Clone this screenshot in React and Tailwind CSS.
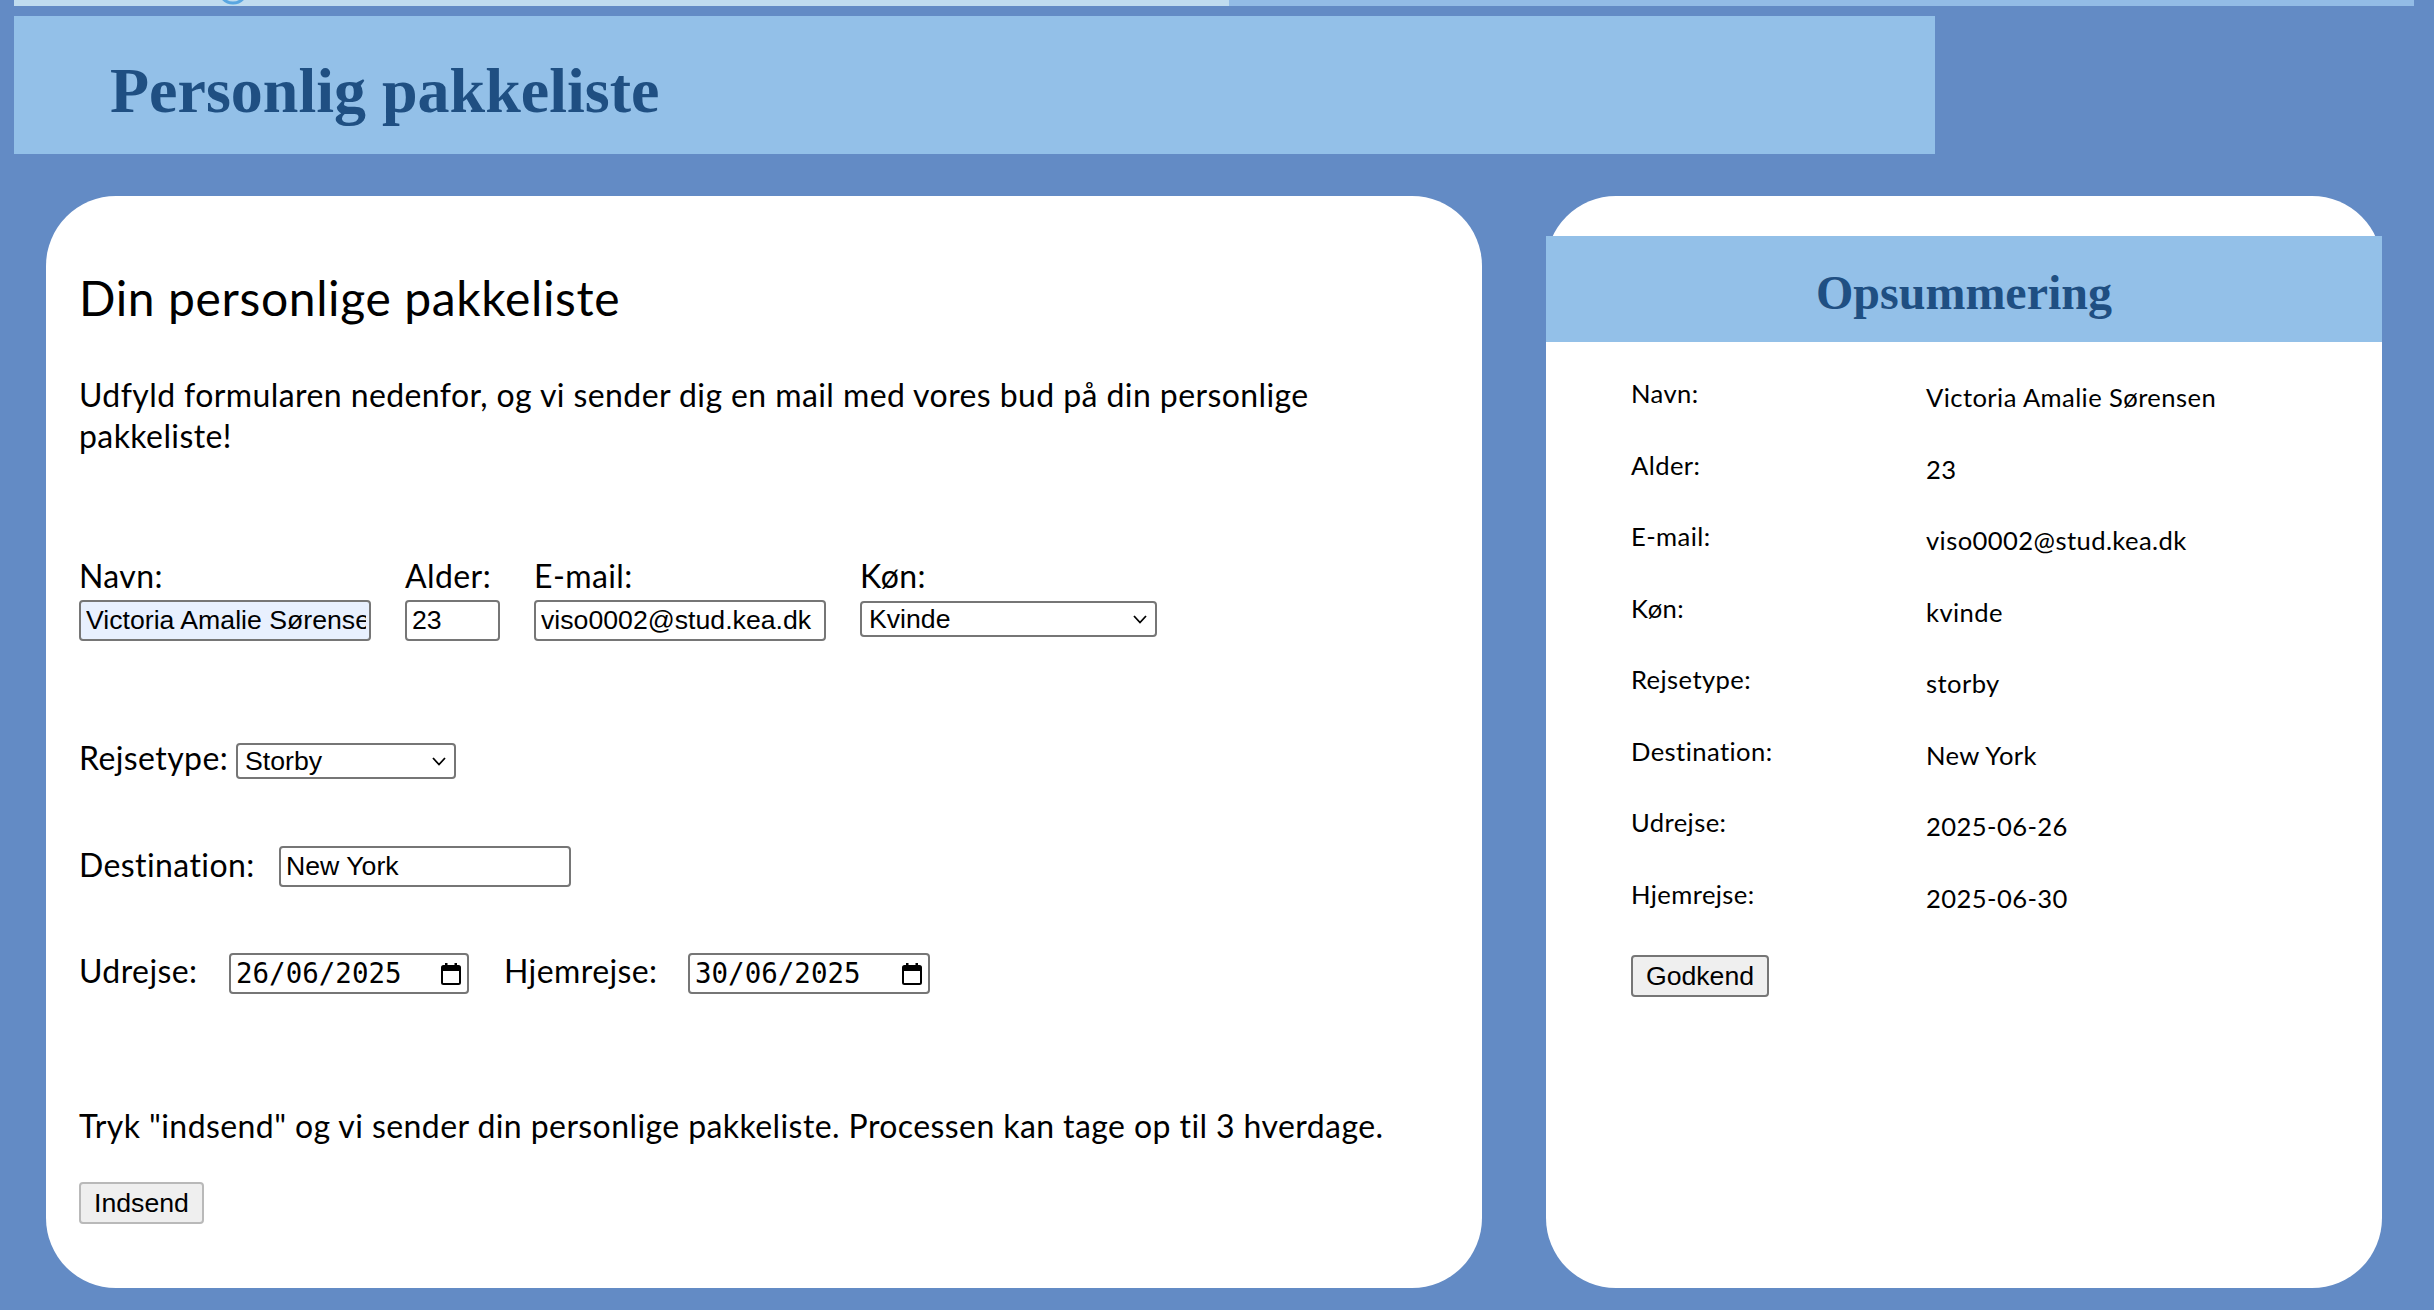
import React from "react";

function Chevron() {
  return (
    <svg width="14" height="9" viewBox="0 0 14 9" className="shrink-0">
      <polyline points="1,1 7,7.5 13,1" fill="none" stroke="#000" strokeWidth="1.8" />
    </svg>
  );
}

function CalendarIcon() {
  return (
    <svg width="20" height="22" viewBox="0 0 20 22" className="shrink-0">
      <rect x="4" y="0" width="2.5" height="4" fill="#000" />
      <rect x="13.5" y="0" width="2.5" height="4" fill="#000" />
      <rect x="1" y="3" width="18" height="18" rx="1.5" fill="none" stroke="#000" strokeWidth="2" />
      <rect x="1" y="3" width="18" height="5" fill="#000" />
    </svg>
  );
}

function TextInput({ value, className = "", autofill = false }) {
  return (
    <input
      readOnly
      value={value}
      className={`h-[41px] rounded-[4px] border-2 border-[#767676] ${autofill ? "bg-[#e8f0fe]" : "bg-white"} pl-[5px] pr-[3px] font-['Liberation_Sans',Arial,sans-serif] text-[26.67px] tracking-normal text-black outline-none ${className}`}
    />
  );
}

function FakeSelect({ value, className = "" }) {
  return (
    <div
      className={`flex h-[36px] items-center justify-between rounded-[4px] border-2 border-[#767676] bg-white pl-[7px] pr-[8px] font-['Liberation_Sans',Arial,sans-serif] text-[26.67px] leading-none tracking-normal text-black ${className}`}
    >
      <span>{value}</span>
      <Chevron />
    </div>
  );
}

function FakeDate({ value, className = "" }) {
  return (
    <div
      className={`flex h-[41px] items-center justify-between rounded-[4px] border-2 border-[#767676] bg-white pl-[5px] pr-[6px] font-['DejaVu_Sans_Mono','Liberation_Mono',monospace] text-[27.5px] leading-none tracking-normal text-black ${className}`}
    >
      <span>{value}</span>
      <CalendarIcon />
    </div>
  );
}

const rows = [
  ["Navn:", "Victoria Amalie Sørensen"],
  ["Alder:", "23"],
  ["E-mail:", "viso0002@stud.kea.dk"],
  ["Køn:", "kvinde"],
  ["Rejsetype:", "storby"],
  ["Destination:", "New York"],
  ["Udrejse:", "2025-06-26"],
  ["Hjemrejse:", "2025-06-30"],
];

export default function App() {
  return (
    <div className="min-h-screen w-full overflow-hidden bg-[#638bc5] font-['Lato','Noto_Sans',sans-serif] tracking-[0.41px] text-black">
      {/* leftover strip at the very top */}
      <div className="ml-[14px] flex h-[6px]">
        <div className="relative h-full w-[1215px] overflow-hidden bg-[#c0dcef]">
          <svg
            width="40"
            height="40"
            viewBox="0 0 40 40"
            className="absolute left-[199px] top-[-31px]"
          >
            <circle cx="20" cy="20" r="14" fill="none" stroke="#5aa6e0" strokeWidth="3" />
          </svg>
        </div>
        <div className="h-full w-[1185px] bg-[#93bce6]" />
      </div>

      {/* header */}
      <header className="ml-[14px] mt-[10px] h-[138px] w-[1921px] bg-[#93c0e8] pl-[96px] pt-[39px]">
        <h1 className="font-['Liberation_Serif','Times_New_Roman',serif] text-[64px] font-bold leading-[71px] tracking-normal text-[#1f4f82]">
          Personlig pakkeliste
        </h1>
      </header>

      <main className="ml-[46px] mt-[42px] flex gap-[64px]">
        {/* form card */}
        <section className="h-[1092px] w-[1436px] rounded-[70px] bg-white pl-[33px] pt-[73px]">
          <h2 className="text-[48px] font-normal leading-[58px] tracking-[0.62px]">Din personlige pakkeliste</h2>
          <p className="mt-[47px] w-[1380px] text-[32px] leading-[41px]">
            Udfyld formularen nedenfor, og vi sender dig en mail med vores bud på din personlige
            <br />
            pakkeliste!
          </p>

          {/* row 1 */}
          <div className="mt-[101px] flex items-start gap-[34px]">
            <div className="flex flex-col">
              <label className="text-[32px] leading-[38px]">Navn:</label>
              <TextInput value="Victoria Amalie Sørensen" autofill className="mt-[5px] w-[292px]" />
            </div>
            <div className="flex flex-col">
              <label className="text-[32px] leading-[38px]">Alder:</label>
              <TextInput value="23" className="mt-[5px] w-[95px]" />
            </div>
            <div className="flex flex-col">
              <label className="text-[32px] leading-[38px]">E-mail:</label>
              <TextInput value="viso0002@stud.kea.dk" className="mt-[5px] w-[292px]" />
            </div>
            <div className="flex flex-col">
              <label className="text-[32px] leading-[38px]">Køn:</label>
              <FakeSelect value="Kvinde" className="mt-[6px] w-[297px]" />
            </div>
          </div>

          {/* row 2 */}
          <div className="mt-[102px] flex items-start">
            <label className="w-[157px] text-[32px] leading-[30px]">Rejsetype:</label>
            <FakeSelect value="Storby" className="w-[220px]" />
          </div>

          {/* row 3 */}
          <div className="mt-[67px] flex items-start">
            <label className="mt-[4px] w-[200px] text-[32px] leading-[30px]">Destination:</label>
            <TextInput value="New York" className="w-[292px]" />
          </div>

          {/* row 4 */}
          <div className="mt-[66px] flex items-start">
            <label className="mt-[3px] w-[150px] text-[32px] leading-[30px]">Udrejse:</label>
            <FakeDate value="26/06/2025" className="w-[240px]" />
            <label className="ml-[35px] mt-[3px] w-[184px] text-[32px] leading-[30px]">Hjemrejse:</label>
            <FakeDate value="30/06/2025" className="w-[242px]" />
          </div>

          <p className="mt-[111px] text-[32px] leading-[41px]">
            Tryk "indsend" og vi sender din personlige pakkeliste. Processen kan tage op til 3 hverdage.
          </p>
          <button className="mt-[36px] flex h-[42px] w-[125px] items-center justify-center rounded-[4px] border-2 border-[#b9b9b9] bg-[#efefef] font-['Liberation_Sans',Arial,sans-serif] text-[26.67px] leading-none tracking-normal text-black">
            Indsend
          </button>
        </section>

        {/* summary card */}
        <aside className="h-[1092px] w-[836px] rounded-[70px] bg-white pt-[40px]">
          <div className="flex h-[106px] items-center justify-center bg-[#93c0e8] pt-[8px]">
            <h2 className="font-['Liberation_Serif','Times_New_Roman',serif] text-[48px] font-bold leading-[54px] tracking-normal text-[#1f4f82]">
              Opsummering
            </h2>
          </div>
          <div className="mt-[36px] pl-[85px]">
            {rows.map(([label, value]) => (
              <div key={label} className="flex h-[71.5px] items-start">
                <span className="w-[295px] text-[25.6px] leading-[30px]">{label}</span>
                <span className="pt-[4px] text-[25.6px] leading-[30px]">{value}</span>
              </div>
            ))}
            <button className="mt-[5px] flex h-[42px] w-[138px] items-center justify-center rounded-[4px] border-2 border-[#767676] bg-[#efefef] font-['Liberation_Sans',Arial,sans-serif] text-[26.67px] leading-none tracking-normal text-black">
              Godkend
            </button>
          </div>
        </aside>
      </main>
    </div>
  );
}
